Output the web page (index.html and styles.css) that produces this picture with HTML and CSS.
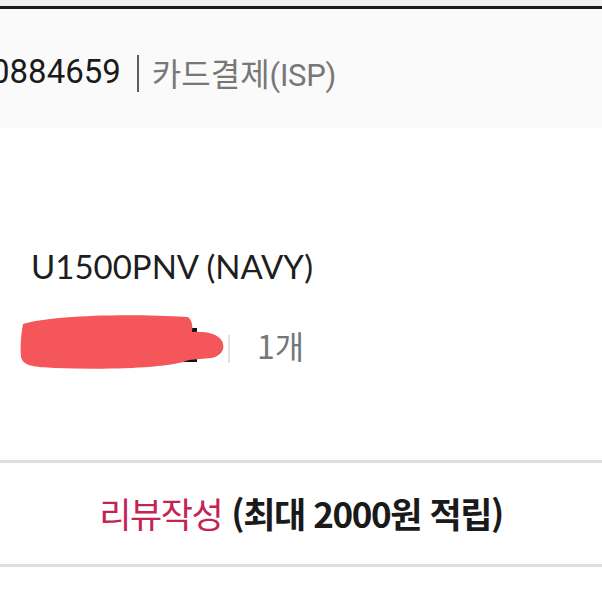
FILE: index.html
```html
<!DOCTYPE html>
<html lang="ko">
<head>
<meta charset="utf-8">
<link rel="stylesheet" href="styles.css">
</head>
<body>
<div class="page">
  <div class="topstrip"></div>
  <div class="rule"></div>
  <div class="payment">
    <span class="orderno">0884659</span><span class="bar"></span><span class="method">카드결제<span class="isp">(ISP)</span></span>
  </div>
  <div class="product">
    <div class="name">U1500PNV (NAVY)</div>
    <div class="option">
      <svg class="mask" width="205" height="62" viewBox="0 0 205 62" aria-hidden="true">
        <rect x="171" y="18" width="6" height="34" fill="#111"/>
        <rect x="158" y="46" width="19" height="6" fill="#111"/>
        <path d="M3 14 C30 6 100 3 168 7 C172 10 173 16 172 22 C186 21 198 24 202 31 C206 39 201 46 191 48 C184 49 176 49 169 50 C150 58 90 60 35 58 C14 57 3 56 1 47 C0 37 1 25 3 14 Z" fill="#f4565a"/>
      </svg>
      <span class="sep"></span>
      <span class="qty">1개</span>
    </div>
  </div>
  <div class="review">
    <span class="rv-red">리뷰작성</span><span class="rv-bold">(최대 2000원 적립)</span>
  </div>
  <div class="bottom"></div>
</div>
</body>
</html>
```

FILE: styles.css
```css
html, body {
  margin: 0;
  padding: 0;
  background: #ffffff;
}
.page {
  width: 602px;
  height: 602px;
  overflow: hidden;
  font-family: "Noto Sans", "Noto Sans CJK KR", sans-serif;
}
.topstrip {
  height: 6px;
  background: #f1f1f1;
}
.rule {
  height: 3px;
  background: #1c1c1c;
}
.payment {
  height: 119px;
  background: #fafafa;
  display: flex;
  align-items: center;
  white-space: nowrap;
  padding-top: 6px;
  box-sizing: border-box;
}
.orderno {
  font-family: Roboto, sans-serif;
  font-size: 33px;
  color: #1a1a1a;
  margin-left: -9px;
}
.bar {
  display: inline-block;
  width: 2px;
  height: 37px;
  background: #5e5e5e;
  margin: 4px 13px 0 16px;
}
.method {
  font-family: "Noto Sans CJK KR", sans-serif;
  font-size: 32px;
  color: #777;
}
.isp {
  font-family: Roboto, sans-serif;
  font-size: 31px;
  letter-spacing: -0.3px;
}
.product {
  height: 332px;
  box-sizing: border-box;
  padding: 118px 0 0 31px;
}
.name {
  font-family: Lato, sans-serif;
  font-size: 33px;
  line-height: 40px;
  color: #1e1e1e;
}
.option {
  display: flex;
  align-items: flex-start;
  margin-top: 24px;
}
.mask {
  display: block;
  margin-left: -11px;
  flex: none;
}
.sep {
  display: block;
  width: 2px;
  height: 28px;
  background: #e2e2e2;
  margin: 25px 0 0 3px;
}
.qty {
  font-family: "Noto Sans CJK KR", sans-serif;
  font-size: 32px;
  line-height: 36px;
  color: #777;
  margin: 17px 0 0 27px;
}
.review {
  border-top: 3px solid #dedede;
  border-bottom: 3px solid #dedede;
  height: 107px;
  display: flex;
  align-items: center;
  justify-content: center;
  gap: 9px;
  font-family: "Noto Sans CJK KR", sans-serif;
  font-size: 35px;
  letter-spacing: -1.4px;
  white-space: nowrap;
  padding-bottom: 2px;
  box-sizing: border-box;
}
.rv-red {
  color: #c42454;
}
.rv-bold {
  color: #1a1a1a;
  font-weight: 700;
}
.bottom {
  height: 40px;
  background: #ffffff;
}
```
